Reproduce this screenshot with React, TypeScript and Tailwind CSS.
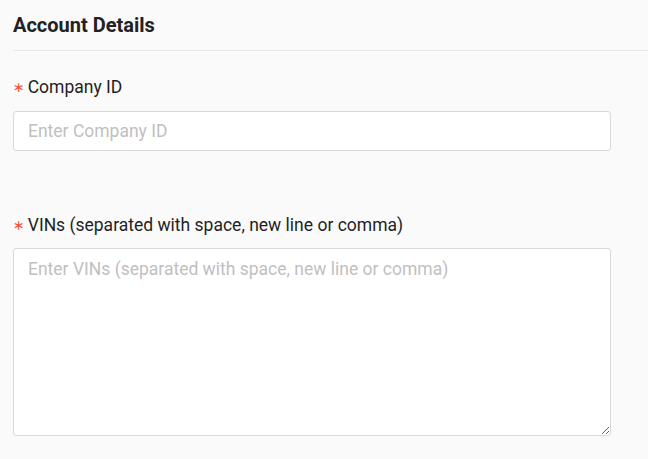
export default function App() {
  return (
    <div className="min-h-[459px] w-[648px] bg-[#fafafa] font-['Roboto',sans-serif] text-[#1f1f1f]">
      <div className="pl-[13px] pt-[13px]">
        <h2 className="h-[24px] text-[20px] font-bold leading-[24px] text-[#222]">Account Details</h2>
        <div className="mt-[13px] h-px bg-[#e8e8e8]" />

        <div className="mt-[24px] flex h-[24px] items-center text-[17.5px] leading-[24px]">
          <span className="mr-[3px] font-['DejaVu_Sans',sans-serif] text-[14px] text-[#f5533d]">∗</span>
          <span>Company ID</span>
        </div>
        <input
          className="mt-[12px] block h-[40px] w-[598px] rounded-[3px] border border-[#d9d9d9] bg-white px-[14px] text-[17.5px] outline-none placeholder:text-[#bfbfbf]"
          placeholder="Enter Company ID"
        />

        <div className="mt-[62px] flex h-[24px] items-center text-[17.5px] leading-[24px]">
          <span className="mr-[3px] font-['DejaVu_Sans',sans-serif] text-[14px] text-[#f5533d]">∗</span>
          <span>VINs (separated with space, new line or comma)</span>
        </div>
        <textarea
          className="mt-[11px] block h-[188px] w-[598px] rounded-[3px] border border-[#d9d9d9] bg-white px-[14px] py-[8px] text-[17.5px] leading-[24px] outline-none placeholder:text-[#bfbfbf]"
          placeholder="Enter VINs (separated with space, new line or comma)"
        />
      </div>
    </div>
  )
}
